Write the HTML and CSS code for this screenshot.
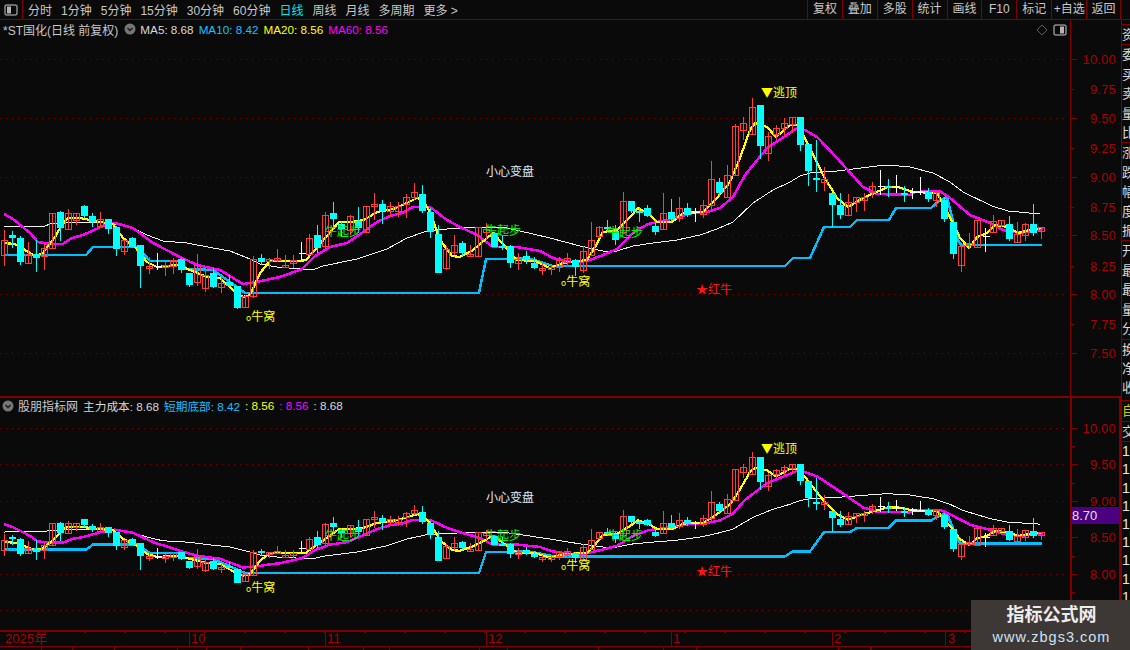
FILE: index.html
```html
<!DOCTYPE html>
<html lang="zh-CN">
<head>
<meta charset="utf-8">
<title>*ST国化 日线</title>
<link rel="stylesheet" href="styles.css">
</head>
<body>
<div class="app">
  <header class="toolbar">
    <div class="panel-btn">
      <svg class="panel-icon" viewBox="0 0 14 12"><rect x="1" y="1" width="12" height="10" rx="2" class="icon-box"/><rect x="3" y="2.5" width="4" height="7" class="icon-fill"/></svg>
    </div>
    <nav class="periods">
      <span>分时</span><span>1分钟</span><span>5分钟</span><span>15分钟</span><span>30分钟</span><span>60分钟</span>
      <span class="active">日线</span><span>周线</span><span>月线</span><span>多周期</span><span>更多 &gt;</span>
    </nav>
    <nav class="tools">
      <span>复权</span><span>叠加</span><span>多股</span><span>统计</span><span>画线</span><span>F10</span><span>标记</span><span>+自选</span><span>返回</span>
    </nav>
  </header>
  <div class="workspace">
    <div class="charts">
      <section class="pane pane-main">
        <div class="plot">
          <svg class="chart" id="chart-main" viewBox="0 20 1070 376"></svg>
          <div class="legend">
            <span class="title">*ST国化(日线 前复权)</span>
            <svg class="chevron" viewBox="0 0 12 12"><circle cx="6" cy="6" r="5.5"/><path d="M3.5 5 6 7.5 8.500 5"/></svg>
            <span class="white">MA5: 8.68</span><span class="blue">MA10: 8.42</span><span class="yellow">MA20: 8.56</span><span class="magenta">MA60: 8.56</span>
          </div>
          <div class="pane-tools">
            <svg class="diamond" viewBox="0 0 12 12"><path d="M6 1 11 6 6 11 1 6Z"/></svg>
            <svg class="panel-icon" viewBox="0 0 14 12"><rect x="1" y="1" width="12" height="10" rx="2" class="icon-box"/><rect x="7" y="2.500" width="4" height="7" class="icon-fill"/></svg>
          </div>
        </div>
        <svg class="axis" id="axis-main" viewBox="1071 20 50 376"></svg>
      </section>
      <section class="pane pane-sub">
        <div class="plot">
          <svg class="chart" id="chart-sub" viewBox="0 398 1070 232"></svg>
          <div class="legend legend-sub">
            <svg class="chevron" viewBox="0 0 12 12"><circle cx="6" cy="6" r="5.500"/><path d="M3.500 5 6 7.500 8.500 5"/></svg>
            <span class="title">股朋指标网</span>
            <span class="white">主力成本: 8.68</span><span class="blue">短期底部: 8.42</span><span class="yellow">: 8.56</span><span class="magenta">: 8.56</span><span class="white">: 8.68</span>
          </div>
        </div>
        <div class="axis-box">
          <svg class="axis" id="axis-sub" viewBox="1072 398 47 232"></svg>
          <div class="price-flag">8.70</div>
        </div>
      </section>
      <svg class="dates" id="dates" viewBox="0 630 1121 17"></svg>
      <div class="tabs" id="tabs"></div>
    </div>
    <aside class="strip" id="strip"></aside>
  </div>
  <div class="watermark">
    <strong>指标公式网</strong>
    <span>www.zbgs3.com</span>
  </div>
</div>
<script src="chart.js"></script>
</body>
</html>
```
FILE: styles.css
```css
* { box-sizing: border-box; }
html, body { margin: 0; padding: 0; }
body {
  width: 1130px;
  height: 650px;
  overflow: hidden;
  background: #0a0a0a;
  color: #c8c8c8;
  font: 12px "Liberation Sans", "Noto Sans CJK SC", sans-serif;
}
.app { position: relative; width: 1130px; height: 650px; display: flex; flex-direction: column; }

.toolbar { height: 20px; flex: none; display: flex; align-items: center; border-bottom: 1px solid #800000; padding-right: 9px; }
.panel-btn { width: 23px; height: 19px; display: flex; align-items: center; justify-content: center; border-right: 1px solid #800000; }
.panel-icon { width: 14px; height: 12px; }
.icon-box { fill: none; stroke: #8c8c8c; stroke-width: 1.5; }
.icon-fill { fill: #b4b4b4; }
.periods { display: flex; gap: 9px; padding-left: 5px; white-space: nowrap; font-size: 12px; }
.periods .active { color: #00e6e6; }
.tools { margin-left: auto; display: flex; font-size: 12px; }
.tools span { width: 34.900px; height: 19px; line-height: 19px; text-align: center; border-left: 1px solid #800000; }
.tools span:last-child { border-right: 1px solid #800000; }

.workspace { flex: 1; display: flex; min-height: 0; }
.charts { width: 1121px; flex: none; display: flex; flex-direction: column; }
.pane { display: flex; }
.pane-main { height: 376px; flex: none; }
.pane-sub { height: 234px; flex: none; border-top: 2px solid #800000; }
.plot { position: relative; width: 1070px; flex: none; }
.chart { position: absolute; left: 0; top: 0; width: 100%; height: 100%; display: block; }
.axis { display: block; width: 51px; flex: none; height: 100%; border-left: 1px solid #800000; }

.legend { position: relative; height: 18px; display: flex; align-items: center; padding-left: 3px; gap: 5px; white-space: nowrap; font-size: 11.700px; }
.legend-sub { padding-left: 2px; height: 15px; }
.legend .title { color: #c8c8c8; font-size: 12px; }
.chevron { width: 12px; height: 12px; flex: none; margin-left: 1px; margin-right: -1px; }
.legend-sub .chevron { margin-left: 0; margin-right: -1px; }
.chevron circle { fill: #767676; }
.chevron path { fill: none; stroke: #1a1a1a; stroke-width: 1.4; }
.white { color: #d8d8d8; }
.blue { color: #14c0ff; }
.yellow { color: #ffff00; }
.magenta { color: #ff00ff; }

.pane-tools { position: absolute; right: 3px; top: 4px; display: flex; align-items: center; gap: 5px; }
.diamond { width: 12px; height: 12px; }
.diamond path { fill: none; stroke: #5a5a5a; }

.axis-box { position: relative; width: 51px; flex: none; height: 232px; border-left: 2px solid #800000; border-right: 2px solid #800000; }
.axis-box .axis { width: 47px; border-left: 0; }
.price-flag { position: absolute; left: 0; right: 0; top: 109px; height: 17px; line-height: 15px; background: #4b0082; border-top: 1px solid #800000; border-bottom: 1px solid #800000; color: #e0e0e0; font-size: 13px; }

.dates { display: block; width: 1121px; height: 17px; flex: none; }
.tabs { display: flex; height: 3px; flex: none; overflow: hidden; }
.tabs span { flex: none; height: 3px; border-right: 1px solid #800000; }

.strip { width: 9px; flex: none; display: flex; flex-direction: column; overflow: hidden; border-left: 1px solid #800000; }
.strip-group { flex: none; display: flex; flex-direction: column; border-bottom: 1px solid #800000; overflow: hidden; font-size: 13px; color: #d8d8d8; line-height: 19.400px; white-space: nowrap; }
.strip-spacer { height: 5px; flex: none; border-bottom: 1px solid #800000; }
.strip-group.tail { padding-bottom: 2px; }
.strip-group.flagged { color: #c8c800; line-height: 20px; }
.strip-digits { line-height: 18.200px; color: #e6e6e6; font-size: 14px; padding-top: 0; border-bottom: 0; }

.watermark { position: absolute; right: 0; bottom: 0; width: 159px; height: 50px; background: #3d3836; display: flex; flex-direction: column; align-items: center; padding-top: 3px; padding-left: 2px; }
.watermark strong { font-size: 18px; line-height: 24px; color: #ececec; }
.watermark span { font-size: 14.500px; line-height: 20px; color: #cfe2f5; letter-spacing: 1px; }

.grid { stroke: #7a0000; stroke-width: 1; stroke-dasharray: 1 5; shape-rendering: crispEdges; }
.line { fill: none; shape-rendering: crispEdges; stroke-linejoin: round; }
.line-white { stroke: #f0f0f0; stroke-width: 1; }
.line-blue { stroke: #00bfff; stroke-width: 2.500; }
.line-magenta { stroke: #ff00ff; stroke-width: 2.500; }
.line-yellow { stroke: #ffff00; stroke-width: 2.200; }
.wick, .doji { shape-rendering: crispEdges; stroke-width: 1; }
.up { fill: none; stroke: #ff3c3c; shape-rendering: crispEdges; }
.down { fill: #00ffff; stroke: none; shape-rendering: crispEdges; }
.wick-up { stroke: #ff3c3c; }
.wick-down { stroke: #00ffff; }
.wick-flat { stroke: #ffffff; }
.label { font: 12px "Noto Sans CJK SC", "Liberation Sans", sans-serif; }
.label-mark { font-size: 8.500px; }
.label-yellow { fill: #ffff00; }
.label-white { fill: #e8e8e8; }
.label-green { fill: #00f000; }
.label-red { fill: #ff1414; }
.tick { stroke: #800000; shape-rendering: crispEdges; }
.price { font: 13px "Liberation Sans", sans-serif; fill: #a80000; text-anchor: end; letter-spacing: .2px; }
.date { font: 13px "Liberation Sans", "Noto Sans CJK SC", sans-serif; fill: #a80000; }
.rule { stroke: #800000; stroke-width: 2; shape-rendering: crispEdges; }
```
FILE: chart.js
```js
// Candle readings: [kind, wickTop, bodyTop, bodyBottom, wickBottom], in thirds of a pixel from a zone's top.
function zone(top, rows) {
  return rows.map(function (r) {
    return { kind: r[0], high: top + r[1] / 3, open: top + r[2] / 3, close: top + r[3] / 3, low: top + r[4] / 3 };
  });
}
var R = 'up', C = 'down', W = 'flat';
var bars = [].concat(
  zone(190, [
    [R,120,151,197,228],[C,123,135,144,175],[C,138,144,216,225],[R,155,192,218,218],[C,150,192,205,245],
    [R,162,175,200,240],[R,70,70,176,176],[C,62,66,114,152],[R,57,70,119,119],[R,70,70,90,105],
    [C,45,48,77,85],[C,70,79,96,110],[R,67,88,108,108],[C,87,87,117,132],[C,108,110,177,197],
    [R,150,151,185,195],[C,140,144,172,175],[C,165,165,228,293],[R,200,229,236,252],[W,188,230,230,240],
    [R,215,227,231,258],[R,205,212,230,252],[C,205,208,240,248],[C,250,250,285,290],[R,193,226,278,288],
    [R,240,257,296,305],[C,235,250,291,295],[R,265,281,292,310],[C,255,275,287,290],[C,287,289,356,356],
    [R,315,318,352,352],[R,198,208,320,325]
  ]),
  zone(170, [
    [C,252,264,275,285],[R,265,268,275,297],[R,236,265,272,275],[R,255,285,290,295],[R,255,272,280,295],
    [W,215,250,250,270],[R,193,205,252,252],[C,165,195,234,248],[R,125,136,230,238],[C,96,129,147,180],
    [C,152,162,178,200],[R,135,139,180,195],[C,111,153,174,190],[R,108,108,186,188],[R,70,102,108,150],
    [C,90,102,122,162],[R,95,109,125,140],[R,95,109,124,142],[R,72,82,102,145],[R,40,67,83,90],
    [C,45,72,122,130],[C,115,125,185,203],[C,165,192,308,308],[R,228,238,296,300],[R,195,225,245,255],
    [C,212,220,251,258],[R,225,253,260,260],[R,170,171,257,262],[R,160,178,186,210],[C,185,188,231,232],
    [C,195,228,232,240],[C,225,228,278,295],[R,250,268,280,300],[C,243,259,272,282]
  ]),
  zone(170, [
    [C,262,278,292,296],[R,280,294,301,315],[R,285,293,298,315],[R,262,270,290,305],[R,250,265,278,290],
    [C,268,270,292,318],[R,228,244,302,310],[R,155,211,256,258],[R,168,172,200,205],[C,150,170,175,185],
    [C,165,182,208,225],[R,66,94,186,190],[C,95,94,123,130],[C,110,123,126,155],[C,105,114,137,140],
    [C,150,168,186,195],[R,69,130,179,180],[C,87,126,148,155],[R,80,115,145,155],[C,100,114,135,140],
    [W,115,128,128,155],[R,90,107,135,145]
  ]),
  zone(85, [
    [R,228,283,362,378],[C,280,290,322,335],[R,240,270,337,337],[R,118,124,272,272],[R,97,115,137,165],
    [R,40,67,149,150],[C,60,60,183,222],[R,140,153,205,228],[R,120,130,148,165],[R,100,115,130,150],
    [R,97,97,117,145],[C,95,97,180,197],[C,177,177,258,302]
  ]),
  zone(160, [
    [C,-60,55,59,95],[R,20,58,68,92],[C,99,99,135,200],[C,100,135,164,178],[R,102,127,167,167],
    [R,112,112,128,155],[R,98,112,122,152],[R,65,79,97,113],[W,30,78,78,105],[C,57,79,82,110],
    [W,45,82,82,100],[C,78,99,105,126],[W,85,98,98,116],[W,52,98,98,105],[C,85,95,117,125],
    [R,95,97,122,142],[C,110,120,177,185],[C,180,186,281,297],[R,258,259,317,335],[R,220,251,258,268],
    [R,180,181,263,263],[W,205,229,229,275],[R,165,185,218,218],[R,181,181,197,200],[C,168,193,237,242],
    [R,185,224,248,248],[R,190,193,226,243],[C,132,193,219,228],[R,200,202,215,237]
  ])
);

var lines = {
  white: [[4,227],[8,226],[45,226],[50,224],[80,222],[103,222],[120,225],[133,228],[147,235],[163,241],[187,243],[213,248],[230,251],[250,259],[260,264],[277,267],[300,269],[315,269],[323,266],[357,259],[387,249],[407,238],[427,231],[447,229],[477,227],[503,227],[520,231],[550,238],[580,246],[603,251],[617,251],[633,246],[653,243],[677,240],[700,235],[717,229],[733,222],[753,203],[773,190],[790,182],[800,176],[810,173],[837,171],[877,166],[888,165],[910,167],[933,173],[950,182],[963,192],[992,206],[1008,211],[1040,214]],
  blue: [[4,255],[86,255],[93,247],[122,247],[137,247],[150,261],[180,261],[186,269],[213,270],[230,282],[245,293],[479,293],[486,259],[508,259],[520,258],[535,260],[553,266],[785,266],[793,258],[810,258],[824,227],[850,227],[857,220],[889,220],[896,208],[931,208],[940,200],[947,197],[952,217],[958,240],[961,245],[1042,245]],
  magenta: [[4,214],[13,219],[30,233],[38,242],[50,244],[63,244],[72,238],[83,235],[103,226],[115,223],[133,228],[153,243],[180,257],[197,265],[220,270],[243,284],[257,282],[270,279],[280,277],[302,269],[315,256],[330,247],[347,243],[363,232],[377,222],[390,216],[402,213],[413,207],[430,207],[447,220],[460,227],[477,235],[493,247],[517,247],[540,251],[553,258],[570,262],[587,261],[603,255],[617,249],[633,233],[648,224],[667,220],[693,213],[707,212],[720,208],[733,197],[745,175],[767,148],[787,135],[797,128],[805,130],[817,137],[837,158],[863,187],[877,194],[910,195],[915,192],[940,191],[950,198],[970,215],[990,223],[1003,230],[1020,233],[1043,229]],
  yellow: [[4,243],[15,244],[35,256],[43,253],[55,237],[63,223],[68,218],[80,218],[100,222],[113,224],[123,238],[135,247],[147,262],[157,267],[177,265],[190,270],[207,277],[220,278],[233,290],[243,297],[250,295],[260,273],[270,261],[300,261],[306,260],[326,237],[339,222],[351,222],[364,220],[377,212],[393,209],[407,203],[417,198],[423,200],[430,212],[440,240],[452,256],[460,257],[473,250],[493,233],[502,243],[517,260],[535,261],[550,268],[563,263],[587,260],[595,247],[603,232],[617,230],[630,217],[638,208],[650,215],[657,222],[672,222],[683,213],[703,212],[717,198],[730,182],[740,158],[750,130],[755,123],[767,127],[776,137],[790,125],[797,125],[805,138],[823,175],[837,198],[848,207],[863,198],[888,187],[898,187],[913,192],[937,193],[950,217],[960,238],[969,248],[977,237],[987,233],[995,225],[1008,227],[1018,233],[1030,230],[1042,228]]
};

var NS = 'http://www.w3.org/2000/svg';
function node(parent, tag, attrs, text) {
  var el = document.createElementNS(NS, tag);
  Object.keys(attrs).forEach(function (k) { el.setAttribute(k, attrs[k]); });
  if (text !== undefined) el.textContent = text;
  parent.appendChild(el);
  return el;
}
function snap(v) { return Math.floor(v) + 0.5; }

function drawLabel(svg, l) {
  var text = node(svg, 'text', { x: l[0], y: l[1] + 4, 'class': 'label label-' + l[3] });
  if (l[2].charAt(0) === 'o') {
    node(text, 'tspan', { 'class': 'label-mark' }, 'o');
    node(text, 'tspan', {}, l[2].slice(1));
  } else {
    text.textContent = l[2];
  }
}

function drawPane(svg, map, gridYs, labels) {
  gridYs.forEach(function (y) { node(svg, 'line', { x1: 0, x2: 1066, y1: y + .5, y2: y + .5, 'class': 'grid' }); });
  ['white', 'blue', 'magenta', 'yellow'].forEach(function (name) {
    var pts = lines[name].map(function (p) { return p[0] + ',' + map(p[1]).toFixed(1); }).join(' ');
    node(svg, 'polyline', { points: pts, 'class': 'line line-' + name });
  });
  bars.forEach(function (b, i) {
    var x = snap(4.3 + 8.04 * i);
    var hi = map(b.high), lo = map(b.low), top = map(b.open), bot = map(b.close);
    node(svg, 'line', { x1: x, x2: x, y1: Math.round(hi), y2: Math.round(lo), 'class': 'wick wick-' + b.kind });
    if (b.kind === 'flat') {
      node(svg, 'line', { x1: x - 3, x2: x + 4, y1: snap(top), y2: snap(top), 'class': 'doji wick-flat' });
    } else if (b.kind === 'down') {
      node(svg, 'rect', { x: x - 3.5, y: Math.round(top), width: 7, height: Math.max(2, Math.round(bot - top)), 'class': 'down' });
    } else {
      node(svg, 'rect', { x: x - 3, y: snap(top), width: 6, height: Math.max(2, Math.round(bot - top)), 'class': 'up' });
    }
  });
  labels.forEach(function (l) { drawLabel(svg, l); });
}

var mainMap = function (y) { return y; };
var subMap = function (y) { return 428 + (y - 59) * 0.62; };

drawPane(document.getElementById('chart-main'), mainMap, [59, 118, 177, 235, 294, 353], [
  [761, 93, '▼逃顶', 'yellow'], [486, 172, '小心变盘', 'white'], [325, 232, '牛起步', 'green'],
  [485, 231, '牛起步', 'green'], [607, 233, '牛起步', 'green'], [246, 317, 'o牛窝', 'yellow'],
  [561, 282, 'o牛窝', 'yellow'], [696, 290, '★红牛', 'red']
]);
drawPane(document.getElementById('chart-sub'), subMap, [428, 464, 501, 537, 574, 610], [
  [761, 449, '▼逃顶', 'yellow'], [486, 498, '小心变盘', 'white'], [325, 536, '牛起步', 'green'],
  [485, 536, '牛起步', 'green'], [607, 536, '牛起步', 'green'], [246, 588, 'o牛窝', 'yellow'],
  [561, 566, 'o牛窝', 'yellow'], [696, 572, '★红牛', 'red']
]);

// Each mark: [y, label, tick length]
function drawAxis(svg, x0, marks, minor) {
  marks.forEach(function (m) {
    node(svg, 'line', { x1: x0, x2: x0 + m[2], y1: m[0] + .5, y2: m[0] + .5, 'class': 'tick' });
    node(svg, 'text', { x: 1116, y: m[0] + 5, 'class': 'price' }, m[1]);
  });
  minor.forEach(function (y) { node(svg, 'line', { x1: x0, x2: x0 + 3, y1: y + .5, y2: y + .5, 'class': 'tick' }); });
}
drawAxis(document.getElementById('axis-main'), 1071,
  [[59,'10.00',6],[89,'9.75',3],[118,'9.50',6],[148,'9.25',3],[177,'9.00',6],[207,'8.75',3],[235,'8.50',6],[266,'8.25',3],[294,'8.00',6],[324,'7.75',3],[353,'7.50',6]],
  []);
drawAxis(document.getElementById('axis-sub'), 1072,
  [[428,'10.00',6],[464,'9.50',6],[501,'9.00',6],[537,'8.50',6],[574,'8.00',6]],
  [446, 483, 519, 556, 592]);

var dates = document.getElementById('dates');
node(dates, 'line', { x1: 0, x2: 1121, y1: 630.5, y2: 630.5, 'class': 'rule' });
node(dates, 'line', { x1: 0, x2: 1121, y1: 646.5, y2: 646.5, 'class': 'tick' });
[[5,'2025年'],[191,'10'],[327,'11'],[488,'12'],[673,'1'],[834,'2'],[948,'3']].forEach(function (d) {
  node(dates, 'text', { x: d[0], y: 643, 'class': 'date' }, d[1]);
});
[189, 325, 486, 671, 832, 945, 1070].forEach(function (x) {
  node(dates, 'line', { x1: x + .5, x2: x + .5, y1: 630, y2: 647, 'class': 'tick' });
});
for (var t = 44; t < 1070; t += 40) {
  node(dates, 'line', { x1: t + .5, x2: t + .5, y1: 630, y2: 633, 'class': 'tick' });
}

[42, 31, 42, 63, 29, 34, 68, 55, 26, 90, 28, 91, 65, 33, 142, 32, 0].forEach(function (w) {
  var cell = document.createElement('span');
  cell.style.width = w + 'px';
  document.getElementById('tabs').appendChild(cell);
});

var strip = document.getElementById('strip');
function stripRow(text, extra) {
  var g = document.createElement('div');
  g.className = 'strip-group' + (extra ? ' ' + extra : '');
  text.split('').forEach(function (c) {
    var s = document.createElement('span');
    s.textContent = c;
    g.appendChild(s);
  });
  strip.appendChild(g);
}
var spacer = document.createElement('div');
spacer.className = 'strip-spacer';
strip.appendChild(spacer);
['资', '委买卖量比', '涨跌幅度振', '开最最量分'].forEach(function (t) { stripRow(t); });
stripRow('换净收', 'tail');
stripRow('自', 'flagged');
stripRow('交');
stripRow('1111111111', 'strip-digits');
```
